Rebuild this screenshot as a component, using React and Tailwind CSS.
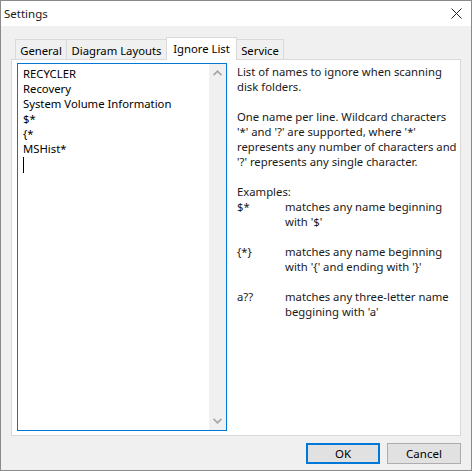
import React from "react";

const font = { fontFamily: '"Noto Sans", "Open Sans", sans-serif' };

function Chevron({ down }) {
  return (
    <svg width="9" height="6" viewBox="0 0 9 6" className="block">
      <path
        d={down ? "M0.5 0.8 L4.5 4.8 L8.5 0.8" : "M0.5 5.2 L4.5 1.2 L8.5 5.2"}
        fill="none"
        stroke="#a6a6a6"
        strokeWidth="1.8"
      />
    </svg>
  );
}

export default function App() {
  const lines = ["RECYCLER", "Recovery", "System Volume Information", "$*", "{*", "MSHist*"];
  return (
    <div
      className="w-[472px] h-[471px] border border-[#8a8a8a] flex flex-col bg-[#f0f0f0] text-[11.3px] leading-[15px] text-black overflow-hidden whitespace-nowrap"
      style={font}
    >
      <div className="h-[25px] bg-white flex items-center justify-between pl-[3px] pr-[9px] shrink-0">
        <span className="text-[11.5px] text-[#1a1a1a]">Settings</span>
        <svg width="11" height="11" viewBox="0 0 11 11">
          <path d="M0.5 0.5 L10.5 10.5 M10.5 0.5 L0.5 10.5" stroke="#222" strokeWidth="1" />
        </svg>
      </div>
      <div className="flex-1 flex flex-col px-[10px] pt-[11px]">
        <div className="flex items-end h-[22px] pl-[4px] relative z-10">
          <div className="w-[52px] h-[20px] border border-b-0 border-[#d9d9d9] bg-[#f0f0f0] flex items-center justify-center pt-[1px]">General</div>
          <div className="w-[101px] h-[20px] -ml-px border border-b-0 border-[#d9d9d9] bg-[#f0f0f0] flex items-center justify-center pt-[1px]">Diagram Layouts</div>
          <div className="w-[71px] h-[23px] -ml-px -mb-px border border-b-0 border-[#d9d9d9] bg-white flex items-center justify-center pb-[1px]">Ignore List</div>
          <div className="w-[48px] h-[20px] -ml-px border border-b-0 border-[#d9d9d9] bg-[#f0f0f0] flex items-center justify-center pt-[1px]">Service</div>
        </div>
        <div className="h-[377px] border border-[#d9d9d9] bg-white flex pl-[5px] pt-[3px]">
          <div className="w-[210px] h-[368px] border border-[#0078d7] flex">
            <div className="flex-1 pl-[5px] pt-[2px]">
              {lines.map((l) => (
                <div key={l} className="h-[15px]">{l}</div>
              ))}
              <div className="h-[15px] flex items-start pt-[1px]">
                <div className="w-px h-[16px] bg-black" />
              </div>
            </div>
            <div className="w-[17px] bg-[#f0f0f0] flex flex-col justify-between items-center pt-[6px] pb-[6px]">
              <Chevron />
              <Chevron down />
            </div>
          </div>
          <div className="flex-1 pl-[10px] pt-[1px] text-[#1a1a1a]">
            <div>List of names to ignore when scanning</div>
            <div>disk folders.</div>
            <div className="h-[15px]" />
            <div>One name per line. Wildcard characters</div>
            <div>'*' and '?' are supported, where '*'</div>
            <div>represents any number of characters and</div>
            <div>'?' represents any single character.</div>
            <div className="h-[15px]" />
            <div>Examples:</div>
            <div className="flex">
              <div className="w-[48px] shrink-0">$*</div>
              <div>
                <div>matches any name beginning</div>
                <div>with '$'</div>
              </div>
            </div>
            <div className="h-[15px]" />
            <div className="flex">
              <div className="w-[48px] shrink-0">{"{*}"}</div>
              <div>
                <div>matches any name beginning</div>
                <div>with '{"{"}' and ending with '{"}"}'</div>
              </div>
            </div>
            <div className="h-[15px]" />
            <div className="flex">
              <div className="w-[48px] shrink-0">a??</div>
              <div>
                <div>matches any three-letter name</div>
                <div>beggining with 'a'</div>
              </div>
            </div>
          </div>
        </div>
        <div className="flex justify-end gap-[7px] mt-[7px]">
          <button className="w-[74px] h-[21px] border-2 border-[#0078d7] bg-[#e1e1e1] flex items-center justify-center text-[11.5px]" style={font}>OK</button>
          <button className="w-[74px] h-[21px] border border-[#adadad] bg-[#e1e1e1] flex items-center justify-center text-[11.5px]" style={font}>Cancel</button>
        </div>
      </div>
    </div>
  );
}
